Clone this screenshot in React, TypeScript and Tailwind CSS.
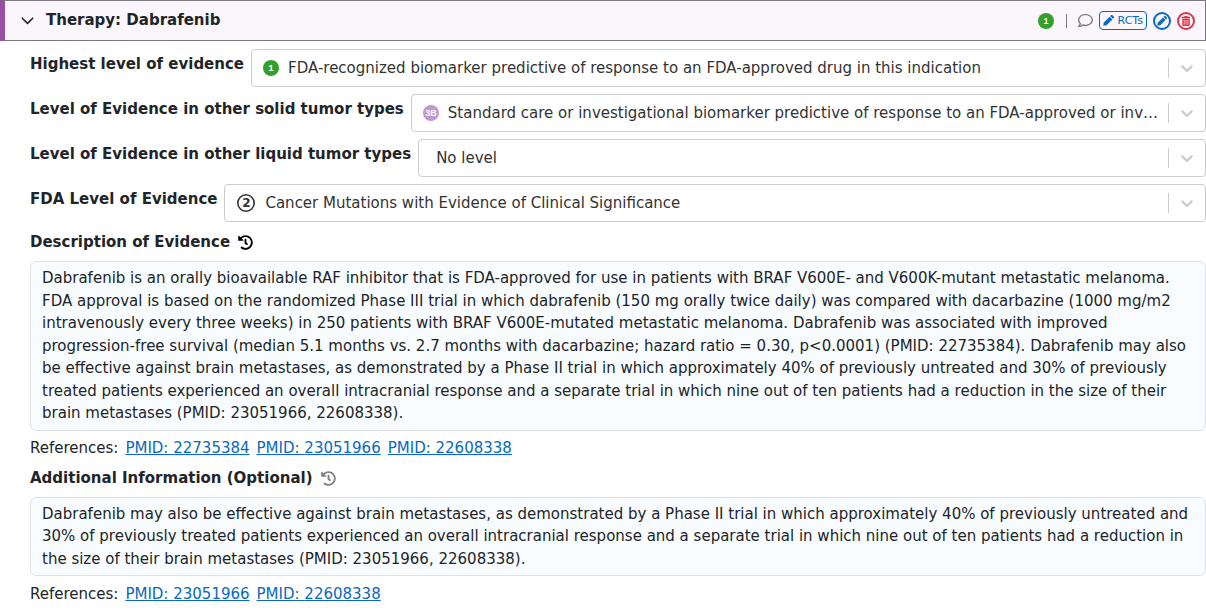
import React from 'react';
import { FaHistory, FaRegComment, FaTrashAlt } from 'react-icons/fa';

type Field = {
  id: string;
  label: string;
  value: string;
  icon?: React.ReactNode;
  pad: string;
};

function PencilIcon({ size }: { size: number }) {
  return (
    <svg width={size} height={size} viewBox="0 0 12 12" fill="currentColor" className="shrink-0">
      <path d="M0.3 11.7 0.9 8.1 7.2 1.8 10.2 4.8 3.9 11.1Z" />
      <path d="M7.8 1.2 8.6 0.4a1.3 1.3 0 0 1 1.8 0l1.2 1.2a1.3 1.3 0 0 1 0 1.8l-0.8 0.8Z" />
    </svg>
  );
}

function LevelIcon({ level, color, size }: { level: string; color: string; size: number }) {
  return (
    <svg width="16" height="16" viewBox="0 0 16 16" aria-label={`Level ${level}`} className="shrink-0">
      <circle cx="8" cy="8" r="8" fill={color} />
      <text
        x="8"
        y="8"
        dy="0.36em"
        textAnchor="middle"
        fontFamily="Liberation Sans, sans-serif"
        fontWeight="700"
        fontSize={size}
        fill="#fff"
      >
        {level}
      </text>
    </svg>
  );
}

function FdaLevelIcon({ level }: { level: string }) {
  return (
    <span className="flex size-5 items-center justify-center">
      <svg width="18" height="18" viewBox="0 0 18 18" aria-label={`FDA level ${level}`}>
        <circle cx="9" cy="9" r="8.2" fill="none" stroke="#333333" strokeWidth="1.6" />
        <text
          x="9.5"
          y="9"
          dy="0.36em"
          textAnchor="middle"
          fontFamily="DejaVu Sans, sans-serif"
          fontWeight="700"
          fontSize="12"
          fill="#333333"
        >
          {level}
        </text>
      </svg>
    </span>
  );
}

const fields: Field[] = [
  {
    id: 'highest-level',
    label: 'Highest level of evidence',
    value: 'FDA-recognized biomarker predictive of response to an FDA-approved drug in this indication',
    icon: <LevelIcon level="1" color="#33a02c" size={9} />,
    pad: 'pl-9',
  },
  {
    id: 'solid-level',
    label: 'Level of Evidence in other solid tumor types',
    value:
      'Standard care or investigational biomarker predictive of response to an FDA-approved or investigational drug in another indication',
    icon: <LevelIcon level="3B" color="#be98ce" size={9} />,
    pad: 'pl-9',
  },
  {
    id: 'liquid-level',
    label: 'Level of Evidence in other liquid tumor types',
    value: 'No level',
    pad: 'pl-[17px]',
  },
  {
    id: 'fda-level',
    label: 'FDA Level of Evidence',
    value: 'Cancer Mutations with Evidence of Clinical Significance',
    icon: <FdaLevelIcon level="2" />,
    pad: 'pl-10',
  },
];

function SelectField({ id, label, value, icon, pad }: Field) {
  return (
    <div className="flex items-start gap-[7px]">
      <label htmlFor={id} className="shrink-0 pt-1 font-bold">
        {label}
      </label>
      <div className="relative min-w-0 grow">
        <select
          id={id}
          className={`block h-[38px] w-full appearance-none overflow-hidden rounded-[4px] border border-[#cccccc] bg-white pr-[43px] text-ellipsis whitespace-nowrap text-[#333333] ${pad}`}
        >
          <option>{value}</option>
        </select>
        {icon && <span className="pointer-events-none absolute inset-y-0 left-3 flex items-center">{icon}</span>}
        <span className="pointer-events-none absolute inset-y-0 right-px flex items-center">
          <span className="h-5 w-px bg-[#cccccc]" />
          <svg width="20" height="20" viewBox="0 0 20 20" fill="#cccccc" className="mx-2">
            <path d="M4.516 7.548c0.436-0.446 1.043-0.481 1.576 0l3.908 3.747 3.908-3.747c0.533-0.481 1.141-0.446 1.574 0 0.436 0.445 0.408 1.197 0 1.615-0.406 0.418-4.695 4.502-4.695 4.502-0.217 0.223-0.502 0.335-0.787 0.335s-0.57-0.112-0.789-0.335c0 0-4.287-4.084-4.695-4.502s-0.436-1.17 0-1.615z" />
          </svg>
        </span>
      </div>
    </div>
  );
}

type NoteProps = {
  id: string;
  title: string;
  text: string;
  pmids: string[];
  historyColor: string;
};

function NoteSection({ id, title, text, pmids, historyColor }: NoteProps) {
  return (
    <section className="flex flex-col gap-[7px]">
      <div className="flex h-[23px] items-center gap-2">
        <label htmlFor={id} className="font-bold">
          {title}
        </label>
        <button type="button" aria-label={`History of ${title}`} className={historyColor}>
          <FaHistory size={15} />
        </button>
      </div>
      <textarea
        id={id}
        defaultValue={text}
        className="field-sizing-content block w-full resize-none overflow-hidden rounded-[6px] border border-[#dee2e6] bg-[#f8fcff] px-[11px] py-[5px] leading-normal"
      />
      <div className="flex h-[22px] items-center gap-[7px]">
        <span>References:</span>
        {pmids.map(pmid => (
          <a key={pmid} href={`#pmid-${pmid}`} className="text-[#0968c3] underline">
            PMID: {pmid}
          </a>
        ))}
      </div>
    </section>
  );
}

export default function App() {
  return (
    <main className="bg-white font-['DejaVu_Sans',sans-serif] text-[15px] leading-normal text-[#212529]">
      <header className="flex h-[41px] items-center justify-between border border-l-[5px] border-[#7b7880] border-l-[#984ea3] bg-[#fbf6fb] pr-[10px] pl-4">
        <div className="flex items-center gap-3">
          <button type="button" aria-label="Collapse therapy">
            <svg width="13" height="13" viewBox="0 0 13 13" fill="none" stroke="#212529" strokeWidth="1.6" strokeLinecap="round" strokeLinejoin="round">
              <path d="M1.3 4.2 6.5 9.4 11.7 4.2" />
            </svg>
          </button>
          <h1 className="font-bold">Therapy: Dabrafenib</h1>
        </div>
        <div className="flex items-center">
          <LevelIcon level="1" color="#33a02c" size={9} />
          <span className="mr-[11px] ml-3 h-[14px] w-px bg-[#7b7880]" />
          <button type="button" aria-label="Comments" className="text-[#808080]">
            <FaRegComment size={15} />
          </button>
          <button
            type="button"
            className="ml-[6px] flex h-[19px] items-center gap-1 rounded-[4px] border border-[#0968c3] px-[3px] text-[11px] leading-none text-[#0968c3]"
          >
            <PencilIcon size={11} />
            <span>RCTs</span>
          </button>
          <button
            type="button"
            aria-label="Edit therapy"
            className="ml-[6px] flex size-[18px] items-center justify-center rounded-full border-2 border-[#0968c3] text-[#0968c3]"
          >
            <PencilIcon size={10} />
          </button>
          <button
            type="button"
            aria-label="Delete therapy"
            className="ml-[6px] flex size-[18px] items-center justify-center rounded-full border-2 border-[#dc3545] text-[#dc3545]"
          >
            <FaTrashAlt size={10} />
          </button>
        </div>
      </header>
      <div className="flex flex-col gap-[7px] pt-2 pl-[30px]">
        <div className="flex flex-col gap-[7px] pb-[2px]">
          {fields.map(field => (
            <SelectField key={field.id} {...field} />
          ))}
        </div>
        <NoteSection
          id="description"
          title="Description of Evidence"
          historyColor="text-black"
          text="Dabrafenib is an orally bioavailable RAF inhibitor that is FDA-approved for use in patients with BRAF V600E- and V600K-mutant metastatic melanoma. FDA approval is based on the randomized Phase III trial in which dabrafenib (150 mg orally twice daily) was compared with dacarbazine (1000 mg/m2 intravenously every three weeks) in 250 patients with BRAF V600E-mutated metastatic melanoma. Dabrafenib was associated with improved progression-free survival (median 5.1 months vs. 2.7 months with dacarbazine; hazard ratio = 0.30, p<0.0001) (PMID: 22735384). Dabrafenib may also be effective against brain metastases, as demonstrated by a Phase II trial in which approximately 40% of previously untreated and 30% of previously treated patients experienced an overall intracranial response and a separate trial in which nine out of ten patients had a reduction in the size of their brain metastases (PMID: 23051966, 22608338)."
          pmids={['22735384', '23051966', '22608338']}
        />
        <NoteSection
          id="additional"
          title="Additional Information (Optional)"
          historyColor="text-[#808080]"
          text="Dabrafenib may also be effective against brain metastases, as demonstrated by a Phase II trial in which approximately 40% of previously untreated and 30% of previously treated patients experienced an overall intracranial response and a separate trial in which nine out of ten patients had a reduction in the size of their brain metastases (PMID: 23051966, 22608338)."
          pmids={['23051966', '22608338']}
        />
      </div>
    </main>
  );
}
